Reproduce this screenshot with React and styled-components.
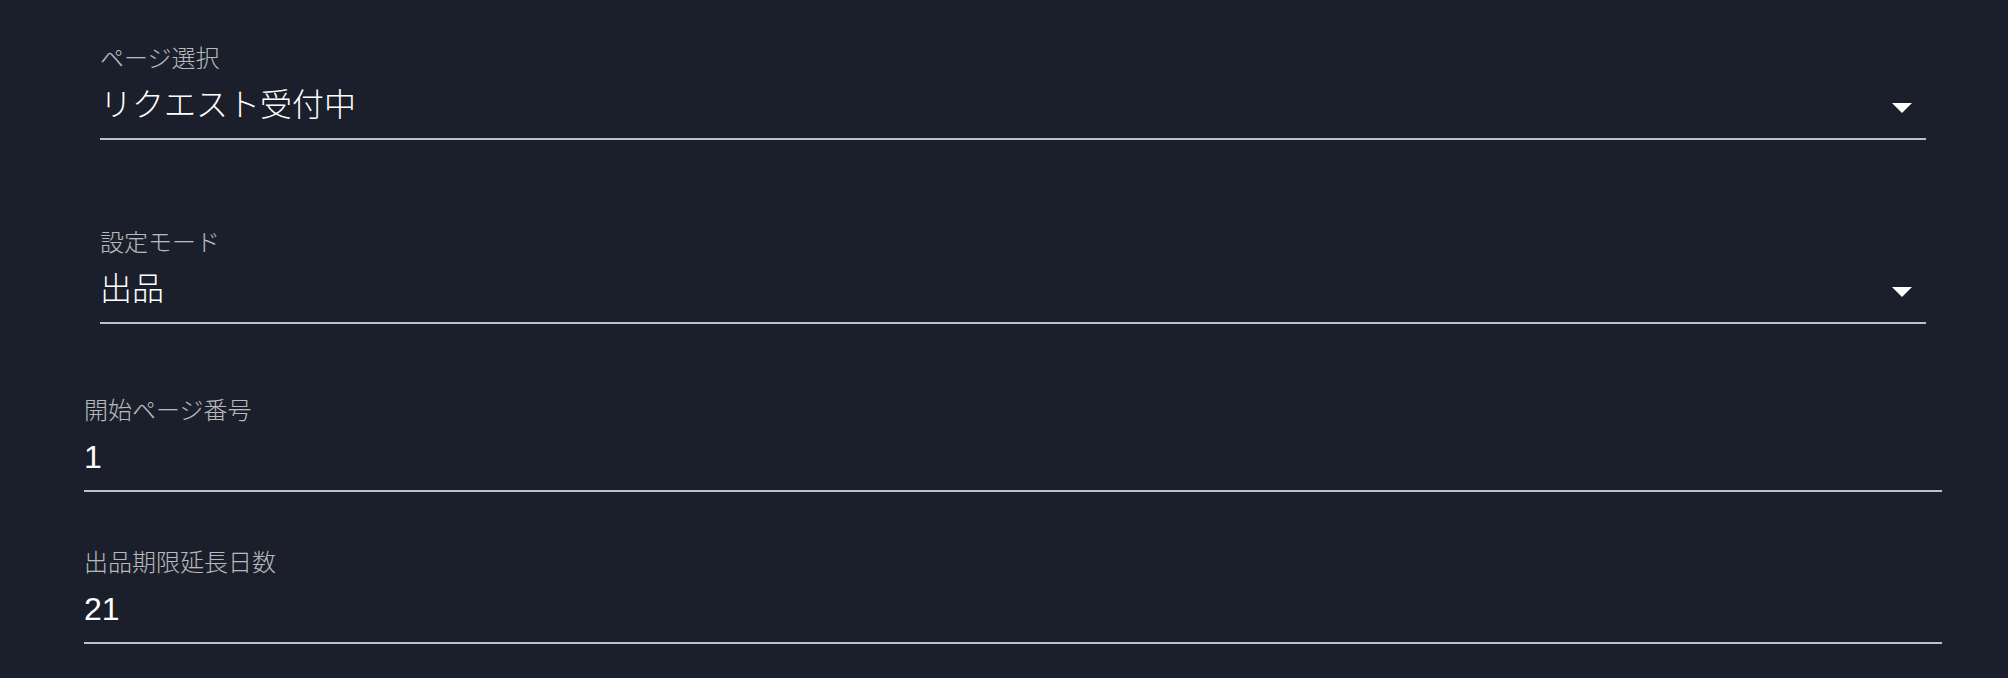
import React from 'react';
import styled, { createGlobalStyle } from 'styled-components';

// Sayfa geneli: koyu arka plan, yazı tipi
const GlobalStyle = createGlobalStyle`
  html, body {
    margin: 0;
    padding: 0;
    background-color: #1a1f2b;
  }
  body {
    font-family: "Liberation Sans", "Noto Sans CJK JP", sans-serif;
  }
`;

// Form alanlarını kapsayan sayfa
const Page = styled.div`
  display: flex;
  flex-direction: column;
  padding: 44px 66px 0 84px;
  min-height: 678px;
  box-sizing: border-box;
`;

// Tek bir alan (select ya da metin girişi)
const Field = styled.div`
  display: flex;
  flex-direction: column;
  margin: ${(p) => p.$top}px ${(p) => (p.$inset ? 16 : 0)}px 0;
`;

const Label = styled.label`
  height: 32px;
  line-height: 30px;
  font-size: 24px;
  font-weight: 300;
  color: rgba(255, 255, 255, 0.7);
  white-space: nowrap;
`;

const InputRow = styled.div`
  display: flex;
  align-items: center;
  height: 64px;
  box-sizing: border-box;
  padding: 6px 0 10px;
  border-bottom: 2px solid rgba(255, 255, 255, 0.72);
`;

const Value = styled.div`
  flex: 1;
  font-size: 32px;
  font-weight: 300;
  line-height: 46px;
  color: #ffffff;
  white-space: nowrap;
`;

const Arrow = styled.svg`
  width: 48px;
  height: 48px;
  flex-shrink: 0;
  fill: #ffffff;
  margin-top: 4px;
`;

const DropIcon = () => (
  <Arrow viewBox="0 0 24 24">
    <path d="M7 10l5 5 5-5z" />
  </Arrow>
);

const fields = [
  { label: 'ページ選択', value: 'リクエスト受付中', select: true, top: 0 },
  { label: '設定モード', value: '出品', select: true, top: 88 },
  { label: '開始ページ番号', value: '1', select: false, top: 72 },
  { label: '出品期限延長日数', value: '21', select: false, top: 56 },
];

const App = () => (
  <>
    <GlobalStyle />
    <Page>
      {fields.map((f) => (
        <Field key={f.label} $top={f.top} $inset={f.select}>
          <Label>{f.label}</Label>
          <InputRow>
            <Value>{f.value}</Value>
            {f.select && <DropIcon />}
          </InputRow>
        </Field>
      ))}
    </Page>
  </>
);

export default App;
